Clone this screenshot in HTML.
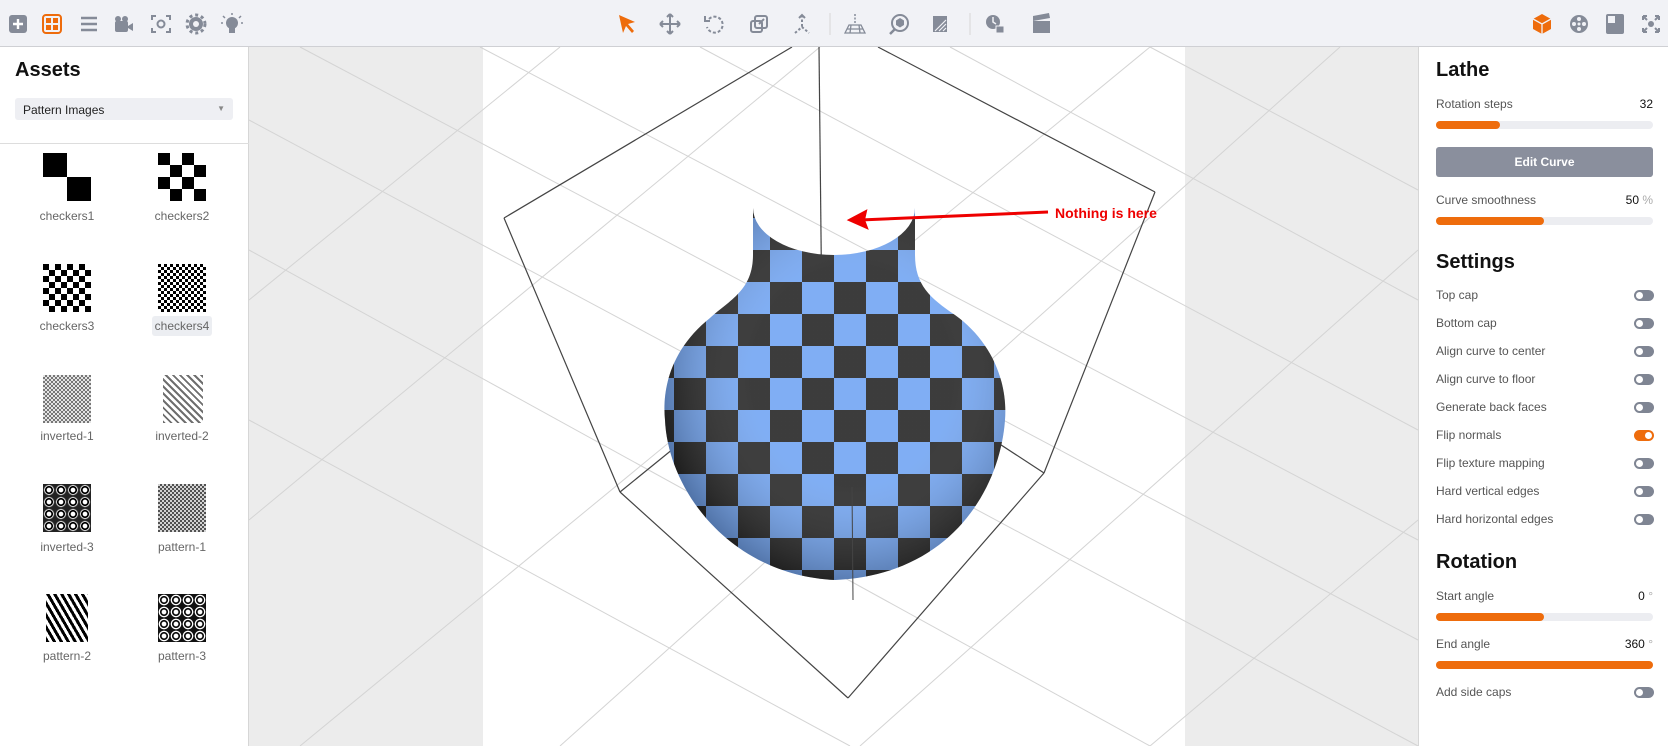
<!DOCTYPE html>
<html><head><meta charset="utf-8"><style>
*{box-sizing:border-box;margin:0;padding:0}
body{width:1668px;height:746px;overflow:hidden;position:relative;font-family:"Liberation Sans",sans-serif;background:#ececec}
.abs{position:absolute}
#tb{left:0;top:0;width:1668px;height:47px;background:#f1f2f6;border-bottom:1px solid #cfd0d4}
#lp{left:0;top:47px;width:249px;height:699px;background:#fff;border-right:1px solid #d6d6d6}
#rp{left:1418px;top:47px;width:250px;height:699px;background:#fff;border-left:1px solid #d6d6d6}
h2{position:absolute;font-size:20px;font-weight:bold;color:#111}
.lbl{position:absolute;font-size:12px;color:#555}
.val{position:absolute;font-size:12px;color:#111;text-align:right}
.sl{position:absolute;left:17px;width:217px;height:8px;border-radius:4px;background:#ecedf1}
.sl i{display:block;height:8px;border-radius:4px;background:#ee6c0c}
.tg{position:absolute;left:215px;width:20px;height:11px;border-radius:6px;background:#7f8593}
.tg::after{content:"";position:absolute;left:2px;top:2px;width:7px;height:7px;border-radius:50%;background:#fff}
.tg.on{background:#ee6c0c}.tg.on::after{left:11px}
.th{position:absolute;width:48px;height:48px}
.tl{position:absolute;width:100px;text-align:center;font-size:12px;color:#666}
.ic{position:absolute;top:13px}
</style></head><body>

<svg class="abs" style="left:0;top:0" width="1668" height="746">
<defs>
<pattern id="chk" width="64" height="64" patternUnits="userSpaceOnUse" patternTransform="translate(802,250)">
<rect width="64" height="64" fill="#6fa3f2"/><rect width="32" height="32" fill="#222"/><rect x="32" y="32" width="32" height="32" fill="#222"/></pattern>
<radialGradient id="shd" cx="0.55" cy="0.45" r="0.6"><stop offset="0.5" stop-color="#fff" stop-opacity="0.12"/><stop offset="1" stop-color="#000" stop-opacity="0.35"/></radialGradient>
</defs>
<rect x="483" y="47" width="702" height="699" fill="#fff"/>
<g stroke="#d4d4d4" stroke-width="1">
<line x1="249" y1="120" x2="1418" y2="746"/><line x1="249" y1="250" x2="1150" y2="746"/><line x1="249" y1="420" x2="850" y2="746"/><line x1="300" y1="47" x2="1418" y2="640"/><line x1="480" y1="47" x2="1418" y2="540"/><line x1="700" y1="47" x2="1418" y2="430"/><line x1="950" y1="47" x2="1418" y2="300"/><line x1="1150" y1="47" x2="1418" y2="190"/>
<line x1="249" y1="300" x2="560" y2="47"/><line x1="249" y1="520" x2="820" y2="47"/><line x1="300" y1="746" x2="1150" y2="47"/><line x1="560" y1="746" x2="1340" y2="47"/><line x1="860" y1="746" x2="1418" y2="250"/><line x1="1150" y1="746" x2="1418" y2="520"/>
</g>
<g stroke="#444" stroke-width="1.2" fill="none">
<line x1="819" y1="47" x2="822" y2="328"/><line x1="822" y1="328" x2="620" y2="492"/><line x1="822" y1="328" x2="1044" y2="473"/>
<line x1="504" y1="218" x2="620" y2="492"/><line x1="1155" y1="192" x2="1044" y2="473"/>
<line x1="620" y1="492" x2="848" y2="698"/><line x1="848" y1="698" x2="1044" y2="473"/>
<line x1="504" y1="218" x2="792" y2="47"/><line x1="1155" y1="192" x2="878" y2="47"/>
</g>
<path id="vase" d="M753,208 L753,255 C753,290 730,300 710,318 C670,350 662,390 665,420 C668,490 730,575 835,580 C950,575 1000,490 1005,420 C1008,380 990,340 955,315 C930,298 915,285 915,255 L915,208 A81,47 0 0 1 753,208 Z" fill="url(#chk)"/>
<path d="M753,208 L753,255 C753,290 730,300 710,318 C670,350 662,390 665,420 C668,490 730,575 835,580 C950,575 1000,490 1005,420 C1008,380 990,340 955,315 C930,298 915,285 915,255 L915,208 A81,47 0 0 1 753,208 Z" fill="url(#shd)"/>
<line x1="852" y1="487" x2="853" y2="600" stroke="#444"/>
<line x1="1048" y1="212" x2="860" y2="220" stroke="#e00" stroke-width="3"/>
<path d="M849,220 L866,211 L864,220 L867,228 Z" fill="#e00" stroke="#e00" stroke-width="2"/>
<text x="1055" y="218" fill="#e00" font-family="Liberation Sans" font-weight="bold" font-size="14">Nothing is here</text>
</svg>

<div id="tb" class="abs">
<svg class="ic" style="left:8px" width="240" height="22" viewBox="0 0 240 22">
<rect x="1" y="2" width="18" height="18" rx="3" fill="#858b98"/><path d="M10 6v10M5 11h10" stroke="#fff" stroke-width="2.4"/>
<rect x="35" y="2" width="18" height="18" rx="3" fill="none" stroke="#ee6c0c" stroke-width="2"/><rect x="38" y="5" width="5" height="5" fill="#ee6c0c"/><rect x="45" y="5" width="5" height="5" fill="#ee6c0c"/><rect x="38" y="12" width="5" height="5" fill="#ee6c0c"/><rect x="45" y="12" width="5" height="5" fill="#ee6c0c"/>
<path d="M73 5h16M73 11h16M73 17h16" stroke="#858b98" stroke-width="2.6"/>
<rect x="107" y="8" width="13" height="11" rx="2" fill="#858b98"/><circle cx="110" cy="6" r="3" fill="#858b98"/><circle cx="117" cy="6" r="3" fill="#858b98"/><path d="M120 13l5-3v8l-5-3z" fill="#858b98"/>
<path d="M144 7V3h4M158 3h4v4M162 15v4h-4M148 19h-4v-4" stroke="#858b98" stroke-width="2" fill="none"/><circle cx="153" cy="11" r="3.5" stroke="#858b98" stroke-width="2" fill="none"/>
<circle cx="188" cy="11" r="7" fill="#858b98"/><circle cx="188" cy="11" r="9" fill="none" stroke="#858b98" stroke-width="3" stroke-dasharray="3 2.9"/><circle cx="188" cy="11" r="3" fill="#f1f2f6"/>
<circle cx="224" cy="10" r="6" fill="#858b98"/><rect x="221" y="15" width="6" height="5" fill="#858b98"/><path d="M224 0v2M215 3l2 2M233 3l-2 2M213 10h2M233 10h2" stroke="#858b98" stroke-width="1.5"/>
</svg>
<svg class="ic" style="left:615px" width="440" height="22" viewBox="0 0 440 22">
<path d="M4 2L20 9l-7 2 6 7-2 2-6-7-3 7z" fill="#ee6c0c"/>
<path d="M55 1v20M45 11h20M55 1l-3 3M55 1l3 3M55 21l-3-3M55 21l3-3M45 11l3-3M45 11l3 3M65 11l-3-3M65 11l-3 3" stroke="#858b98" stroke-width="2" fill="none"/>
<path d="M94 6a8 8 0 1 1-2 8" stroke="#858b98" stroke-width="2" fill="none" stroke-dasharray="3 2"/><path d="M90 3v5h5" stroke="#858b98" stroke-width="2" fill="none"/>
<rect x="136" y="8" width="11" height="11" rx="2" stroke="#858b98" stroke-width="2" fill="none"/><rect x="140" y="3" width="12" height="12" rx="2" stroke="#858b98" stroke-width="2" fill="none"/><path d="M144 11l5-5" stroke="#858b98" stroke-width="2"/>
<path d="M187 2v12M180 20l7-6 7 6" stroke="#858b98" stroke-width="2" fill="none" stroke-dasharray="2.5 2"/><path d="M184 5l3-3 3 3" stroke="#858b98" stroke-width="2" fill="none"/>
<line x1="215" y1="-13" x2="215" y2="34" stroke="#d6d6d6"/>
<path d="M240 1v10" stroke="#858b98" stroke-width="1.5" stroke-dasharray="2 1.5"/><path d="M230 20l4-8h12l4 8zM232 16h16M236 12l-1 8M244 12l1 8" stroke="#858b98" stroke-width="1.3" fill="none"/>
<circle cx="285" cy="10" r="8" stroke="#858b98" stroke-width="2" fill="none"/><path d="M280 16l-5 5" stroke="#858b98" stroke-width="2.5"/><path d="M285 5l4 2.5v4.5l-4 2.5-4-2.5v-4.5z" fill="#858b98"/>
<path d="M318 3h14v16h-14z" fill="#858b98"/><path d="M320 18l11-11M324 18l7-7M328 18l3-3" stroke="#f1f2f6" stroke-width="1.2"/>
<line x1="355" y1="-13" x2="355" y2="34" stroke="#d6d6d6"/>
<circle cx="378" cy="9" r="7" fill="#858b98"/><path d="M378 4v5l3 2" stroke="#f1f2f6" stroke-width="1.5" fill="none"/><rect x="381" y="13" width="8" height="7" fill="#858b98" stroke="#f1f2f6"/>
<rect x="418" y="8" width="17" height="12" fill="#858b98"/><path d="M418 3l16-3 1 5-17 3z" fill="#858b98"/>
</svg>
<svg class="ic" style="left:1530px" width="135" height="22" viewBox="0 0 135 22">
<path d="M12 1l9 5v10l-9 5-9-5V6z" fill="#ee6c0c"/><path d="M3 6l9 5 9-5M12 11v10" stroke="#f1f2f6" stroke-width="1.3" fill="none"/>
<circle cx="49" cy="11" r="9" fill="#858b98"/><circle cx="49" cy="6" r="2" fill="#f1f2f6"/><circle cx="49" cy="16" r="2" fill="#f1f2f6"/><circle cx="44" cy="11" r="2" fill="#f1f2f6"/><circle cx="54" cy="11" r="2" fill="#f1f2f6"/><circle cx="49" cy="11" r="1.5" fill="#f1f2f6"/>
<rect x="77" y="2" width="16" height="18" rx="1" stroke="#858b98" stroke-width="2" fill="none"/><path d="M78 10h7V3h7v16H78z" fill="#858b98"/>
<path d="M113 3l4 4M129 3l-4 4M113 19l4-4M129 19l-4-4M113 3v4M113 3h4M129 3h-4M129 3v4M113 19v-4M113 19h4M129 19h-4M129 19v-4" stroke="#858b98" stroke-width="2" fill="none"/><circle cx="121" cy="11" r="3" fill="#858b98"/>
</svg>
</div>

<div id="lp" class="abs">
<h2 style="left:15px;top:12px">Assets</h2>
<div class="abs" style="left:15px;top:51px;width:218px;height:22px;background:#eeeff3;border-radius:3px;font-size:12px;color:#222;padding:5px 0 0 8px">Pattern Images<span style="position:absolute;right:8px;top:6px;font-size:8px;color:#888">▼</span></div>
<div class="abs" style="left:0;top:96px;width:249px;height:1px;background:#ddd"></div>
</div>
<div class="th" style="left:43px;top:153px;background:conic-gradient(#fff 0 25%,#000 0 50%,#fff 0 75%,#000 0);background-size:48px 48px"></div>
<div class="th" style="left:158px;top:153px;background:conic-gradient(#fff 0 25%,#000 0 50%,#fff 0 75%,#000 0);background-size:24px 24px"></div>
<div class="th" style="left:43px;top:264px;background:conic-gradient(#fff 0 25%,#000 0 50%,#fff 0 75%,#000 0);background-size:12px 12px"></div>
<div class="th" style="left:158px;top:264px;background:conic-gradient(#fff 0 25%,#000 0 50%,#fff 0 75%,#000 0);background-size:6px 6px"></div>
<div class="th" style="left:43px;top:375px;background:repeating-conic-gradient(#555 0 25%,#ddd 0 50%);background-size:4px 4px;opacity:.8"></div>
<div class="th" style="left:163px;top:375px;width:40px;background:repeating-linear-gradient(45deg,#333 0 2px,#fff 2px 5px),#fff;opacity:.7"></div>
<div class="th" style="left:43px;top:484px;background:radial-gradient(circle,#fff 25%,#000 30% 45%,#fff 50%,#222 65%);background-size:12px 12px"></div>
<div class="th" style="left:158px;top:484px;background:repeating-conic-gradient(#333 0 25%,#ccc 0 50%);background-size:4px 4px;opacity:.85"></div>
<div class="th" style="left:46px;top:594px;width:42px;background:repeating-linear-gradient(60deg,#000 0 3px,#fff 3px 6px);"></div>
<div class="th" style="left:158px;top:594px;background:radial-gradient(circle,#fff 25%,#111 30% 45%,#fff 50% 60%,#111 65%);background-size:12px 12px"></div>
<div class="tl" style="left:17px;top:209px">checkers1</div>
<div class="tl" style="left:132px;top:209px">checkers2</div>
<div class="tl" style="left:17px;top:319px">checkers3</div>
<div class="abs" style="left:152px;top:316px;width:60px;height:20px;background:#eceef2;border-radius:3px"></div>
<div class="tl" style="left:132px;top:319px">checkers4</div>
<div class="tl" style="left:17px;top:429px">inverted-1</div>
<div class="tl" style="left:132px;top:429px">inverted-2</div>
<div class="tl" style="left:17px;top:540px">inverted-3</div>
<div class="tl" style="left:132px;top:540px">pattern-1</div>
<div class="tl" style="left:17px;top:649px">pattern-2</div>
<div class="tl" style="left:132px;top:649px">pattern-3</div>

<div id="rp" class="abs">
<h2 style="left:17px;top:12px">Lathe</h2>
<div class="lbl" style="left:17px;top:50px">Rotation steps</div><div class="val" style="right:15px;top:50px">32</div>
<div class="sl" style="top:74px"><i style="width:64px"></i></div>
<div class="abs" style="left:17px;top:100px;width:217px;height:30px;background:#8a8f9d;border-radius:3px;color:#fff;font-size:12px;font-weight:bold;text-align:center;line-height:30px">Edit Curve</div>
<div class="lbl" style="left:17px;top:146px">Curve smoothness</div><div class="val" style="right:15px;top:146px">50 <span style="color:#aaa">%</span></div>
<div class="sl" style="top:170px"><i style="width:108px"></i></div>
<h2 style="left:17px;top:204px">Settings</h2>
<div class="lbl" style="left:17px;top:241px">Top cap</div><div class="tg" style="top:243px"></div>
<div class="lbl" style="left:17px;top:269px">Bottom cap</div><div class="tg" style="top:271px"></div>
<div class="lbl" style="left:17px;top:297px">Align curve to center</div><div class="tg" style="top:299px"></div>
<div class="lbl" style="left:17px;top:325px">Align curve to floor</div><div class="tg" style="top:327px"></div>
<div class="lbl" style="left:17px;top:353px">Generate back faces</div><div class="tg" style="top:355px"></div>
<div class="lbl" style="left:17px;top:381px">Flip normals</div><div class="tg on" style="top:383px"></div>
<div class="lbl" style="left:17px;top:409px">Flip texture mapping</div><div class="tg" style="top:411px"></div>
<div class="lbl" style="left:17px;top:437px">Hard vertical edges</div><div class="tg" style="top:439px"></div>
<div class="lbl" style="left:17px;top:465px">Hard horizontal edges</div><div class="tg" style="top:467px"></div>
<h2 style="left:17px;top:504px">Rotation</h2>
<div class="lbl" style="left:17px;top:542px">Start angle</div><div class="val" style="right:15px;top:542px">0 <span style="color:#aaa">°</span></div>
<div class="sl" style="top:566px"><i style="width:108px"></i></div>
<div class="lbl" style="left:17px;top:590px">End angle</div><div class="val" style="right:15px;top:590px">360 <span style="color:#aaa">°</span></div>
<div class="sl" style="top:614px"><i style="width:217px"></i></div>
<div class="lbl" style="left:17px;top:638px">Add side caps</div><div class="tg" style="top:640px"></div>
</div>
</body></html>
